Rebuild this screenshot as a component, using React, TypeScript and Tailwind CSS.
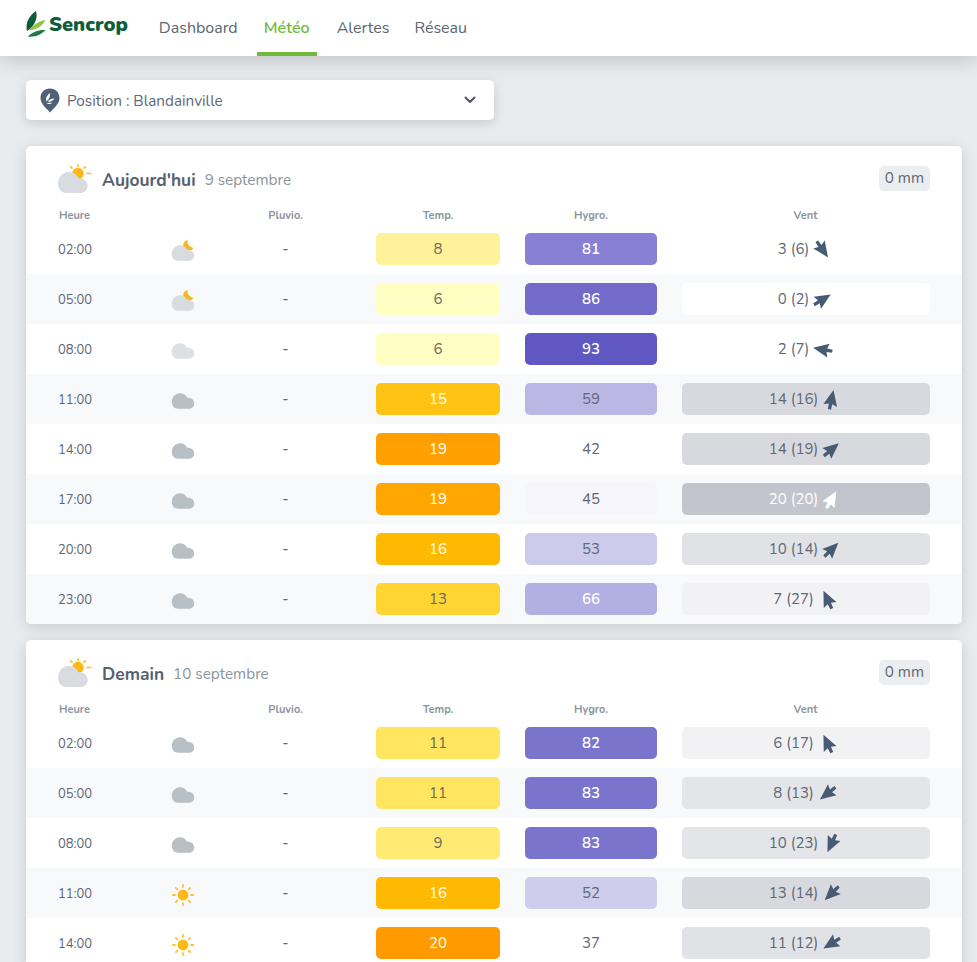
import React from "react";

const font = "font-['Nunito','Lato','Noto_Sans',sans-serif]";

type Row = {
  t: string;
  icon: "moon" | "paleCloud" | "cloud" | "sun";
  temp: number;
  tc: string;
  tw: boolean;
  h: number;
  hc: string;
  hw: boolean;
  v: string;
  vc: string;
  vw?: boolean;
  rot: number;
};

const today: Row[] = [
  { t: "02:00", icon: "moon", temp: 8, tc: "#fff29a", tw: false, h: 81, hc: "#8780d4", hw: true, v: "3 (6)", vc: "transparent", rot: 145 },
  { t: "05:00", icon: "moon", temp: 6, tc: "#ffffc4", tw: false, h: 86, hc: "#726bc9", hw: true, v: "0 (2)", vc: "#ffffff", rot: 58 },
  { t: "08:00", icon: "paleCloud", temp: 6, tc: "#ffffc4", tw: false, h: 93, hc: "#5f57c2", hw: true, v: "2 (7)", vc: "transparent", rot: 280 },
  { t: "11:00", icon: "cloud", temp: 15, tc: "#ffc413", tw: true, h: 59, hc: "#bab7e4", hw: false, v: "14 (16)", vc: "#d8d9de", rot: 12 },
  { t: "14:00", icon: "cloud", temp: 19, tc: "#ff9f00", tw: true, h: 42, hc: "transparent", hw: false, v: "14 (19)", vc: "#d8d9de", rot: 50 },
  { t: "17:00", icon: "cloud", temp: 19, tc: "#ffa700", tw: true, h: 45, hc: "#f6f5fb", hw: false, v: "20 (20)", vc: "#c3c5cc", vw: true, rot: 30 },
  { t: "20:00", icon: "cloud", temp: 16, tc: "#ffb900", tw: true, h: 53, hc: "#cccbec", hw: false, v: "10 (14)", vc: "#e1e2e6", rot: 45 },
  { t: "23:00", icon: "cloud", temp: 13, tc: "#ffd433", tw: false, h: 66, hc: "#b2afe2", hw: true, v: "7 (27)", vc: "#f2f2f4", rot: -25 },
];

const tomorrow: Row[] = [
  { t: "02:00", icon: "cloud", temp: 11, tc: "#ffe560", tw: false, h: 82, hc: "#7a74cc", hw: true, v: "6 (17)", vc: "#f2f2f4", rot: -25 },
  { t: "05:00", icon: "cloud", temp: 11, tc: "#ffe560", tw: false, h: 83, hc: "#7b74cd", hw: true, v: "8 (13)", vc: "#e4e5e8", rot: 232 },
  { t: "08:00", icon: "cloud", temp: 9, tc: "#ffeb74", tw: false, h: 83, hc: "#7b74cd", hw: true, v: "10 (23)", vc: "#e4e5e8", rot: 205 },
  { t: "11:00", icon: "sun", temp: 16, tc: "#ffb900", tw: true, h: 52, hc: "#cecdec", hw: false, v: "13 (14)", vc: "#d8d9de", rot: 225 },
  { t: "14:00", icon: "sun", temp: 20, tc: "#ff9a00", tw: true, h: 37, hc: "transparent", hw: false, v: "11 (12)", vc: "#e1e2e6", rot: 238 },
];

function Arrow({ rot, white }: { rot: number; white?: boolean }) {
  return (
    <svg width="21" height="21" viewBox="0 0 24 24" className="shrink-0" style={{ transform: `rotate(${rot}deg)` }}>
      <path d="M12 1 L20 19 L14 17 L13.8 23.5 L10.2 23.5 L10 17 L4 19 Z" fill={white ? "#ffffff" : "#475c74"} />
    </svg>
  );
}

function Sun() {
  const rays = [0, 45, 90, 135, 180, 225, 270, 315];
  return (
    <svg width="24" height="24" viewBox="0 0 24 24">
      <circle cx="12" cy="12" r="5.4" fill="#fdb813" />
      {rays.map((r) => (
        <rect key={r} x="11.1" y="1" width="1.8" height="3.8" rx="0.9" fill="#fdc030" transform={`rotate(${r} 12 12)`} />
      ))}
    </svg>
  );
}

const cloudPath = "M7 21.8 C3.4 21.8 0.8 19 0.8 14.8 C0.8 10 4.3 6.2 9 6.2 C12.4 6.2 15 8 16.2 10.8 C20.4 10.6 23.2 13 23.2 16.4 C23.2 19.8 20.6 21.8 17.4 21.8 Z";

function WeatherIcon({ kind }: { kind: Row["icon"] }) {
  if (kind === "sun") return <Sun />;
  const fill = kind === "cloud" ? "#b8bfc5" : kind === "moon" ? "#d8dbdf" : "#dcdfe3";
  return (
    <svg width="24" height="24" viewBox="0 0 24 24">
      {kind === "moon" && <path d="M16.5 1 A5.5 5.5 0 1 0 22.5 9 A7 7 0 0 1 16.5 1 Z" fill="#f6b81c" />}
      <path d={cloudPath} fill={fill} transform={kind === "moon" ? "translate(0 0)" : "translate(0 -2)"} />
    </svg>
  );
}

function HeaderIcon() {
  return (
    <svg width="34" height="30" viewBox="0 0 34 30" className="mb-[2px] shrink-0">
      <circle cx="20" cy="9.5" r="5.8" fill="#fbb817" />
      <g stroke="#fbc02d" strokeWidth="1.7" strokeLinecap="round">
        <path d="M20 0.9 V2.6" />
        <path d="M12.6 2.8 L14 4" />
        <path d="M27.4 2.8 L26 4" />
        <path d="M29 9.5 H32.6" />
      </g>
      <path d={cloudPath} fill="#d8dbdf" transform="translate(-1 -0.4) scale(1.32 1.35)" />
    </svg>
  );
}

function Logo() {
  return (
    <svg width="20" height="26" viewBox="0 0 20 26" className="shrink-0">
      <path d="M1 20 C-1 12 3 5 10 0 C12 7 9 15 1 20 Z" fill="#0f5c3a" />
      <path d="M3 19.5 C7 14 13 10 19.5 9 C17 14 11 19 3 19.5 Z" fill="#8fc63f" />
      <path d="M2 25.5 C6 21 13 18.5 19.5 19 C15 24 8 26.5 2 25.5 Z" fill="#1c7a45" />
    </svg>
  );
}

function Pin() {
  return (
    <svg width="20" height="25" viewBox="0 0 20 25" className="shrink-0">
      <path d="M10 0.5 C15.5 0.5 19.5 4.5 19.5 10 C19.5 16 13 21 10 24.5 C7 21 0.5 16 0.5 10 C0.5 4.5 4.5 0.5 10 0.5 Z" fill="#4f6275" />
      <path d="M6 13.5 C5.5 10 7 7 10 5 C10.5 8 9.5 11 6 13.5 Z" fill="#ffffff" />
      <path d="M7.5 13.5 C9.5 11.5 11.5 10.5 14.5 10.5 C13 13 10.5 14 7.5 13.5 Z" fill="#ffffff" />
      <path d="M6.5 15.5 C8.5 14.5 10.5 14.5 12.5 14.8 C10.5 16.3 8.5 16.3 6.5 15.5 Z" fill="#ffffff" />
    </svg>
  );
}

const grid = "grid grid-cols-[100px_50px_155px_150px_156px_273px] pl-8 pr-5 items-center";

function Table({ rows }: { rows: Row[] }) {
  return (
    <div>
      <div className={`${grid} h-5 pt-1 text-[11px] font-bold text-[#8d949c]`}>
        <div className="pl-px">Heure</div>
        <div />
        <div className="text-center">Pluvio.</div>
        <div className="text-center">Temp.</div>
        <div className="text-center">Hygro.</div>
        <div className="text-center">Vent</div>
      </div>
      {rows.map((r, i) => (
        <div key={r.t} className={`${grid} h-[50px] text-[15px] text-[#606875] ${i % 2 === 1 ? "bg-[#f8f9fb]" : ""}`}>
          <div className="text-[13px] pt-1">{r.t}</div>
          <div className="flex justify-center pt-1">
            <WeatherIcon kind={r.icon} />
          </div>
          <div className="text-center">-</div>
          <div className="px-[13px]">
            <div
              className={`h-8 rounded-[5px] flex items-center justify-center ${r.tw ? "text-white" : "text-[#6b6a5c]"}`}
              style={{ backgroundColor: r.tc }}
            >
              {r.temp}
            </div>
          </div>
          <div className="px-3">
            <div
              className={`h-8 rounded-[5px] flex items-center justify-center ${r.hw ? "text-white font-semibold" : ""}`}
              style={{ backgroundColor: r.hc }}
            >
              {r.h}
            </div>
          </div>
          <div className="px-[12.5px]">
            <div
              className={`h-8 rounded-[5px] flex items-center justify-center gap-[3px] ${r.vw ? "text-white" : ""}`}
              style={{ backgroundColor: r.vc }}
            >
              <span>{r.v}</span>
              <Arrow rot={r.rot} white={r.vw} />
            </div>
          </div>
        </div>
      ))}
    </div>
  );
}

function Card({ title, date, rows }: { title: string; date: string; rows: Row[] }) {
  return (
    <section className="bg-white rounded-[5px] shadow-[0_3px_14px_rgba(60,70,80,0.2)] overflow-hidden">
      <div className="h-[58px] flex items-center pl-8 pr-8 pt-[10px]">
        <HeaderIcon />
        <span className="ml-[10px] text-[17.4px] font-bold text-[#56606f]">{title}</span>
        <span className="ml-[9px] text-[15.3px] text-[#8d949c]">{date}</span>
        <span className="ml-auto -mt-[3px] h-[25px] px-[6px] rounded-[5px] bg-[#ebeef1] text-[15.3px] text-[#606875] flex items-center">0 mm</span>
      </div>
      <Table rows={rows} />
    </section>
  );
}

export default function App() {
  return (
    <div className={`${font} h-[962px] overflow-hidden bg-[#e9ecef]`}>
      <header className="h-14 bg-white shadow-[0_4px_20px_rgba(60,70,80,0.25)] flex relative pl-[26px]">
        <div className="flex items-center h-[46px] gap-[3px] pt-[1px]">
          <Logo />
          <span className="text-[20px] font-black text-[#0f5c3a] pt-[3px]">Sencrop</span>
        </div>
        <nav className="flex ml-[23px] text-[16px] text-[#5c6670]">
          <a className="px-2 h-14 flex items-center">Dashboard</a>
          <a className="ml-[11px] px-2 w-[60px] justify-center h-14 flex items-center font-semibold text-[#6fba3c] border-b-4 border-[#6fba3c] pt-1">Météo</a>
          <a className="ml-3 px-2 h-14 flex items-center">Alertes</a>
          <a className="ml-[9px] px-2 h-14 flex items-center">Réseau</a>
        </nav>
      </header>
      <main className="px-[26px] pr-[15px] pt-6 flex flex-col gap-4">
        <div className="w-[468px] h-10 mb-[10px] bg-white rounded-[5px] shadow-[0_3px_12px_rgba(60,70,80,0.2)] flex items-center pl-[14px] pr-[18px]">
          <Pin />
          <span className="ml-[7px] pt-[2px] text-[15.3px] text-[#606875]">Position : Blandainville</span>
          <svg className="ml-auto" width="12" height="8" viewBox="0 0 12 8">
            <path d="M1.5 1.5 L6 6 L10.5 1.5" fill="none" stroke="#4f5660" strokeWidth="2" strokeLinecap="round" strokeLinejoin="round" />
          </svg>
        </div>
        <Card title="Aujourd'hui" date="9 septembre" rows={today} />
        <Card title="Demain" date="10 septembre" rows={tomorrow} />
      </main>
    </div>
  );
}
